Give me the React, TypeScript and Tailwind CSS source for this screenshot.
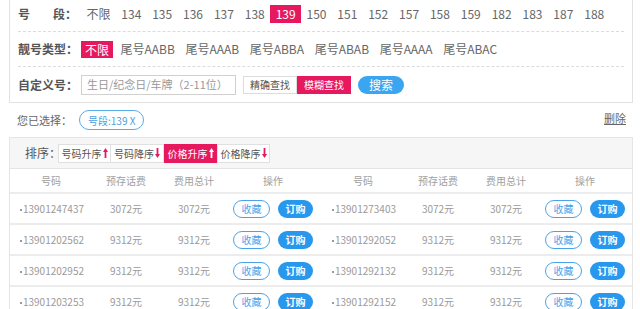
import React from "react";

const PINK = "bg-[#e6195f]";

function Arrow({ up, white }: { up: boolean; white?: boolean }) {
  const c = white ? "#ffffff" : "#e6195f";
  return (
    <svg width="5" height="10" viewBox="0 0 5 10" className="ml-[1px]">
      {up ? (
        <>
          <polygon points="0,4 2.5,0 5,4" fill={c} />
          <rect x="1.6" y="3" width="1.8" height="7" fill={c} />
        </>
      ) : (
        <>
          <polygon points="0,6 2.5,10 5,6" fill={c} />
          <rect x="1.6" y="0" width="1.8" height="7" fill={c} />
        </>
      )}
    </svg>
  );
}

const segs = ["134", "135", "136", "137", "138", "139", "150", "151", "152", "157", "158", "159", "182", "183", "187", "188"];
const types = ["尾号AABB", "尾号AAAB", "尾号ABBA", "尾号ABAB", "尾号AAAA", "尾号ABAC"];

const left = [
  ["13901247437", "3072元", "3072元"],
  ["13901202562", "9312元", "9312元"],
  ["13901202952", "9312元", "9312元"],
  ["13901203253", "9312元", "9312元"],
];
const right = [
  ["13901273403", "3072元", "3072元"],
  ["13901292052", "9312元", "9312元"],
  ["13901292132", "9312元", "9312元"],
  ["13901292152", "9312元", "9312元"],
];

function Half({ r }: { r: string[] }) {
  return (
    <div className="grid grid-cols-[82px_68px_68px_94px] items-center w-[312px]">
      <div className="text-center text-[10px] text-[#9a9a9a] pl-[2px]">
        <span className="inline-block w-[2px] h-[2px] bg-[#999] align-middle mr-[1px]" />
        {r[0]}
      </div>
      <div className="text-center text-[10px] text-[#9a9a9a]">{r[1]}</div>
      <div className="text-center text-[10px] text-[#9a9a9a]">{r[2]}</div>
      <div className="flex items-center justify-center gap-[8px] pr-[4px]">
        <div className="w-[37px] h-[18px] rounded-full border border-[#4aa3ea] text-[#4aa3ea] text-[10px] flex items-center justify-center">收藏</div>
        <div className="w-[35px] h-[18px] rounded-full bg-[#2898ee] text-white text-[10px] font-bold flex items-center justify-center">订购</div>
      </div>
    </div>
  );
}

function HeadHalf() {
  return (
    <div className="grid grid-cols-[82px_68px_68px_94px] items-center w-[312px] text-[10px] text-[#a0a0a0]">
      <div className="text-center">号码</div>
      <div className="text-center">预存话费</div>
      <div className="text-center">费用总计</div>
      <div className="text-center pr-[4px]">操作</div>
    </div>
  );
}

export default function App() {
  return (
    <div
      className="w-[640px] h-[309px] overflow-hidden bg-white"
      style={{ fontFamily: '"Noto Sans CJK SC", "Noto Sans", sans-serif' }}
    >
      {/* filter panel */}
      <div className="ml-[9px] w-[624px] -mt-[4px] border border-[#e2e2e2] px-[8px]">
        <div className="h-[35px] flex items-center border-b border-dashed border-[#dcdcdc]">
          <div className="w-[63px] pr-[4px] flex justify-between text-[12px] font-bold text-[#555]">
            <span>号</span>
            <span>段：</span>
          </div>
          <div className="flex items-center text-[12px] text-[#666]">
            <span className="px-[5.45px]">不限</span>
            {segs.map((s) => (
              <span
                key={s}
                className={s === "139" ? `px-[5.45px] ${PINK} text-white leading-[18px]` : "px-[5.45px] leading-[18px]"}
              >
                {s}
              </span>
            ))}
          </div>
        </div>
        <div className="h-[35px] flex items-center border-b border-dashed border-[#dcdcdc]">
          <div className="w-[63px] pr-[3px] text-right text-[12px] font-bold text-[#555]">靓号类型：</div>
          <div className="flex items-center text-[12px] text-[#666] gap-[0.6px]">
            <span className={`px-[4px] mr-[2px] ${PINK} text-white leading-[17px]`}>不限</span>
            {types.map((t) => (
              <span key={t} className="px-[5px]">
                {t}
              </span>
            ))}
          </div>
        </div>
        <div className="h-[35px] flex items-center">
          <div className="w-[63px] pr-[3px] text-right text-[12px] font-bold text-[#555]">自定义号：</div>
          <div className="w-[155px] h-[20px] border border-[#d0d0d0] text-[11px] text-[#999] flex items-center pl-[5px]">
            生日/纪念日/车牌（2-11位）
          </div>
          <div className="ml-[7px] flex">
            <div className="w-[54px] h-[18px] border border-[#dcdcdc] text-[10px] text-[#555] flex items-center justify-center">精确查找</div>
            <div className={`w-[54px] h-[18px] ${PINK} text-[10px] text-white flex items-center justify-center`}>模糊查找</div>
          </div>
          <div className="ml-[7px] w-[46px] h-[18px] rounded-full bg-[#3aa6f2] text-white text-[12px] flex items-center justify-center">搜索</div>
        </div>
      </div>

      {/* selected */}
      <div className="h-[34px] flex items-center pl-[17px] pr-[14px]">
        <span className="text-[11px] text-[#666]">您已选择：</span>
        <span className="ml-[7px] h-[20px] px-[8px] rounded-full border border-[#5aabea] text-[#4a9fe0] text-[10px] flex items-center">
          号段:139&nbsp;X
        </span>
        <span className="ml-auto text-[11px] text-[#666] underline -mt-[3px]">删除</span>
      </div>

      {/* sort bar */}
      <div className="ml-[9px] w-[624px] h-[32px] border border-[#e5e5e5] bg-[#f6f6f6] flex items-center pl-[15px]">
        <span className="w-[33px] text-[12px] text-[#555] whitespace-nowrap">排序：</span>
        <div className="flex items-center text-[10px]">
          <div className="w-[53px] h-[19px] bg-white border border-[#e0e0e0] text-[#555] flex items-center justify-center">号码升序<Arrow up /></div>
          <div className="w-[53px] h-[19px] bg-white border border-l-0 border-[#e0e0e0] text-[#555] flex items-center justify-center">号码降序<Arrow up={false} /></div>
          <div className={`w-[53px] h-[19px] ${PINK} text-white flex items-center justify-center`}>价格升序<Arrow up white /></div>
          <div className="w-[53px] h-[19px] bg-white border border-[#e0e0e0] text-[#555] flex items-center justify-center">价格降序<Arrow up={false} /></div>
        </div>
      </div>

      {/* table */}
      <div className="ml-[9px] w-[624px] border-x border-[#e5e5e5]">
        <div className="h-[25px] flex border-b-2 border-[#ececec]">
          <HeadHalf />
          <HeadHalf />
        </div>
        {left.map((l, i) => (
          <div key={i} className="h-[31px] flex border-b-2 border-[#ececec]">
            <Half r={l} />
            <Half r={right[i]} />
          </div>
        ))}
      </div>
    </div>
  );
}
